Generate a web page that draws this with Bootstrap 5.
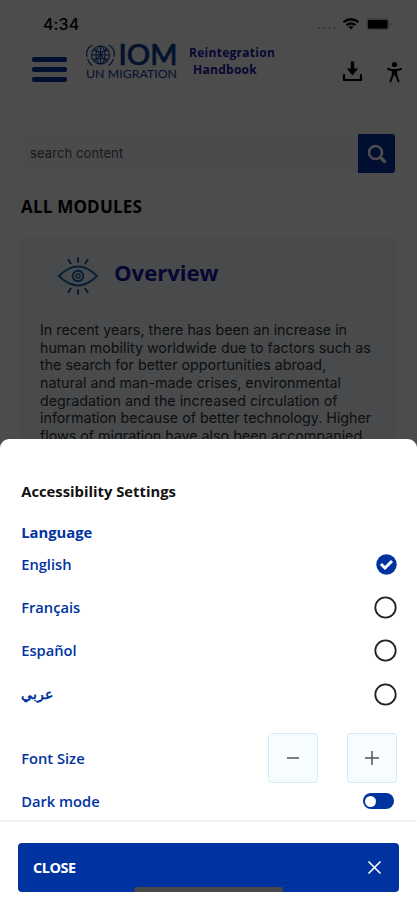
<!DOCTYPE html>
<html lang="en">
<head>
<meta charset="utf-8">
<meta name="viewport" content="width=device-width, initial-scale=1">
<title>Reintegration Handbook</title>
<link href="https://cdn.jsdelivr.net/npm/bootstrap@5.3.0/dist/css/bootstrap.min.css" rel="stylesheet">
<style>
  :root { --brand: #0033a0; }
  body { font-family: "Open Sans", "Noto Sans", sans-serif; background: #fff; color: #000; }
  .phone { width: 417px; height: 900px; }
  svg { display: block; flex: none; overflow: visible; }
  .status { height: 42px; padding: 6px 26px 0 43px; }
  .clock { font: 500 16px/40px Inter, sans-serif; letter-spacing: .1px; }
  .topbar { height: 70px; padding: 0 14px 0 32px; }
  .burger { width: 35px; margin-top: 15px; gap: 5px; }
  .burger span { height: 5px; border-radius: 2px; background: var(--brand); }
  .logo { margin: 1px 0 0 19px; }
  .logo-word { font: 500 28px/28px Lato, sans-serif; }
  .app-name { font-size: 12px; font-weight: 700; line-height: 17px; margin: 2px 0 0 11px; color: #1717a8; width: 92px; letter-spacing: .28px; }
  .app-name-sub { padding-left: 4px; }
  .header-icons { margin-top: 19px; }
  .search { height: 39px; margin: 22px 22px 0; }
  .search-field { background: #f6fcfd; font: 400 13px/38px Inter, sans-serif; padding-left: 8px; color: #555; letter-spacing: .1px; }
  .search-btn { width: 37px; background: var(--brand); border-radius: 0 3px 3px 0; }
  .modules-title { font-size: 17px; line-height: 24px; font-weight: 700; margin: 22px 0 20px 21px; letter-spacing: .2px; }
  .module { margin: 0 21px; height: 260px; background: #f2f9fd; border: 1px solid #e8f1f5; border-radius: 5px; padding: 14px 0 0 18px; }
  .module-head { height: 43px; }
  .module-title { font-size: 22.1px; line-height: 40px; font-weight: 700; color: #1717a8; margin-left: 16px; margin-top: -2px; }
  .module-eye { margin: 2px 0 0 18px; }
  .module-copy { font: 400 14.27px/17.65px Inter, sans-serif; margin-top: 24px; white-space: nowrap; color: #333; }
  .shade { background: rgba(0,0,0,.7); }
  .sheet { height: 461px; background: #fff; border-radius: 9px 9px 0 0; padding-top: 40px; color: var(--brand); font-size: 14.7px; font-weight: 600; }
  .sheet-title { font-size: 14.8px; line-height: 24px; font-weight: 700; color: #111; }
  .sheet-body { padding: 0 20.500px 0 21.200px; height: 343px; }
  .lang-title { font-size: 14.8px; line-height: 22px; font-weight: 700; margin-top: 18px; }
  .lang { height: 43.2px; }
  .lang > span { margin-top: -1px; }
  .lang-ar { font-size: 14px; }
  .size-row { height: 50px; margin-top: 17px; }
  .step { width: 50px; height: 50px; border: 1px solid #d3eaf7; border-radius: 4px; background: #f7fcff; }
  .step-plus { margin-left: 29px; }
  .mode-row { height: 37px; }
  .toggle { width: 31px; height: 16px; border-radius: 8px; background: var(--brand); padding: 2px; margin-right: 3px; }
  .toggle span { width: 11px; height: 11px; border-radius: 50%; background: #fff; }
  .sheet-foot { border-top: 2px solid #f3f3f3; padding: 21px 18px 0; margin-top: -2px; }
  .close-btn { height: 49px; border-radius: 4px; background: var(--brand); color: #fff; padding: 0 18px 0 15px; font-size: 14.5px; font-weight: 700; letter-spacing: -.5px; }
  .home-bar { width: 149px; height: 5px; left: 134px; bottom: 8px; background: #48484a; border-radius: 3px; }
</style>
</head>
<body>
<div class="phone position-relative overflow-hidden">
  <header>
    <div class="status d-flex justify-content-between align-items-center">
      <span class="clock">4:34</span>
      <svg width="74" height="16" viewBox="0 0 74 16">
        <g fill="#aaa"><circle cx="2" cy="12" r="1.1"/><circle cx="7.300" cy="12" r="1.100"/><circle cx="12.500" cy="12" r="1.100"/><circle cx="17.500" cy="12" r="1.100"/></g>
        <g fill="none" stroke="#000" stroke-width="2.300"><path d="M26.500 6.200q7.500-6 15 0"/><path d="M29.500 9.200q4.500-3.500 9 0"/></g>
        <path d="M34 13.500l-2.600-2.700q2.600-1.700 5.200 0z"/>
        <rect x="49.500" y="2.500" width="22.500" height="11.500" rx="3" fill="#c4c4c4"/><rect x="51" y="4" width="19.500" height="8.500" rx="1"/><path d="M73 6.500q2 1.700 0 3.500z" fill="#888"/>
      </svg>
    </div>
    <div class="topbar d-flex align-items-start">
      <div class="burger d-flex flex-column"><span></span><span></span><span></span></div>
      <svg class="logo" width="92" height="37" viewBox="0 0 92 37" fill="#0a3c96">
        <g fill="none" stroke="#0a3c96" stroke-width="1.100" transform="translate(-.5 1)">
          <circle cx="15" cy="11" r="9"/><ellipse cx="15" cy="11" rx="4.500" ry="9"/><path d="M15 2v18M6 11h18M7.500 6.500q7.500 2 15 0M7.500 15.500q7.500-2 15 0M9 4.500l12 13M21 4.500l-12 13"/>
          <path d="M7 1Q-.5 5 1.500 13M2 15q2 5 5 6.500M23 1q7.500 4 5.500 12M28 15q-2 5-5 6.500"/>
        </g>
        <text x="32.500" y="22" class="logo-word" stroke="#0a3c96" stroke-width=".7" textLength="59" lengthAdjust="spacingAndGlyphs">IOM</text>
        <text x="0" y="34.500" font-family="Lato, sans-serif" font-size="11.500" textLength="91" lengthAdjust="spacingAndGlyphs">UN MIGRATION</text>
      </svg>
      <div class="app-name"><div>Reintegration</div><div class="app-name-sub">Handbook</div></div>
      <svg class="header-icons ms-auto" width="61" height="22" viewBox="0 0 61 22">
        <g transform="translate(.5 .5)"><path d="M8.300 0h3.400v7h4L10 14 4.300 7h4z"/><path d="M1.500 13.500v5h17v-5" fill="none" stroke="#000" stroke-width="2.200" stroke-linejoin="round" stroke-linecap="round"/></g>
        <circle cx="52.500" cy="3.500" r="2.600"/><path d="M46 8Q52.500 10.500 59 8M48.500 20.500l2.500-7M56.500 20.500l-2.500-7" fill="none" stroke="#000" stroke-width="2" stroke-linecap="round"/><path d="M49.800 8h5.400v6.500h-5.400z"/>
      </svg>
    </div>
  </header>
  <main>
    <div class="search d-flex">
      <div class="search-field flex-grow-1">search content</div>
      <div class="search-btn d-flex align-items-center justify-content-center">
        <svg width="20" height="20" viewBox="0 0 20 20" fill="none" stroke="#fff" stroke-width="2.600"><circle cx="8.500" cy="8.500" r="6.500"/><path d="M13 13l5.500 5.500" stroke-width="3.300"/></svg>
      </div>
    </div>
    <h1 class="modules-title">ALL MODULES</h1>
    <section class="module">
      <div class="module-head d-flex align-items-start">
        <svg class="module-eye" width="40" height="40" viewBox="0 0 40 40" fill="none" stroke="#1a65b8" stroke-width="1.900"><path d="M1 20Q20 1 39 20Q20 39 1 20z"/><circle cx="20" cy="20" r="5.300"/><circle cx="20" cy="20" r="2" stroke-width="1.500"/><path stroke="#3c3cb0" d="M20 1.500v5M10 3l3 5M30 3l-3 5M20 33.500v5M10 37l3-5M30 37l-3-5"/></svg>
        <h2 class="module-title mb-0">Overview</h2>
      </div>
      <p class="module-copy mb-0">In recent years, there has been an increase in<br>human mobility worldwide due to factors such as<br>the search for better opportunities abroad,<br>natural and man-made crises, environmental<br>degradation and the increased circulation of<br>information because of better technology. Higher<br>flows of migration have also been accompanied</p>
    </section>
  </main>
  <div class="shade position-absolute top-0 start-0 w-100 h-100"></div>
  <section class="sheet position-absolute bottom-0 start-0 w-100">
    <div class="sheet-body">
      <h2 class="sheet-title mb-0">Accessibility Settings</h2>
      <h3 class="lang-title mb-0">Language</h3>
      <div class="langs">
        <div class="lang d-flex align-items-center justify-content-between"><span>English</span>
          <svg width="21" height="21" viewBox="0 0 21 21"><circle cx="10.500" cy="10.500" r="10.200" fill="#0033a0"/><path d="M5 10l4 4 7-7" fill="none" stroke="#fff" stroke-width="3"/></svg></div>
        <div class="lang d-flex align-items-center justify-content-between"><span>Français</span>
          <svg width="23" height="23" viewBox="0 0 23 23"><circle cx="11.500" cy="11.500" r="10.200" fill="none" stroke="#222" stroke-width="1.800"/></svg></div>
        <div class="lang d-flex align-items-center justify-content-between"><span>Español</span>
          <svg width="23" height="23" viewBox="0 0 23 23"><circle cx="11.500" cy="11.500" r="10.200" fill="none" stroke="#222" stroke-width="1.800"/></svg></div>
        <div class="lang d-flex align-items-center justify-content-between"><span class="lang-ar" lang="ar">عربي</span>
          <svg width="23" height="23" viewBox="0 0 23 23"><circle cx="11.500" cy="11.500" r="10.200" fill="none" stroke="#222" stroke-width="1.800"/></svg></div>
      </div>
      <div class="size-row d-flex align-items-center"><span class="me-auto">Font Size</span>
        <div class="step d-flex align-items-center justify-content-center"><svg width="14" height="14" viewBox="0 0 14 14"><path d="M1 7h12" stroke="#555" stroke-width="1.500"/></svg></div>
        <div class="step step-plus d-flex align-items-center justify-content-center"><svg width="14" height="14" viewBox="0 0 14 14"><path d="M0 7h14M7 0v14" stroke="#555" stroke-width="1.500"/></svg></div>
      </div>
      <div class="mode-row d-flex align-items-center justify-content-between">Dark mode
        <div class="toggle d-flex align-items-center"><span></span></div></div>
    </div>
    <div class="sheet-foot">
      <div class="close-btn d-flex align-items-center justify-content-between">CLOSE
        <svg width="13" height="13" viewBox="0 0 13 13"><path d="M.5.5l12 12M12.500.5l-12 12" stroke="#fff" stroke-width="1.600"/></svg></div>
    </div>
  </section>
  <div class="home-bar position-absolute"></div>
</div>
<script src="https://cdn.jsdelivr.net/npm/bootstrap@5.3.0/dist/js/bootstrap.bundle.min.js"></script>
</body>
</html>
